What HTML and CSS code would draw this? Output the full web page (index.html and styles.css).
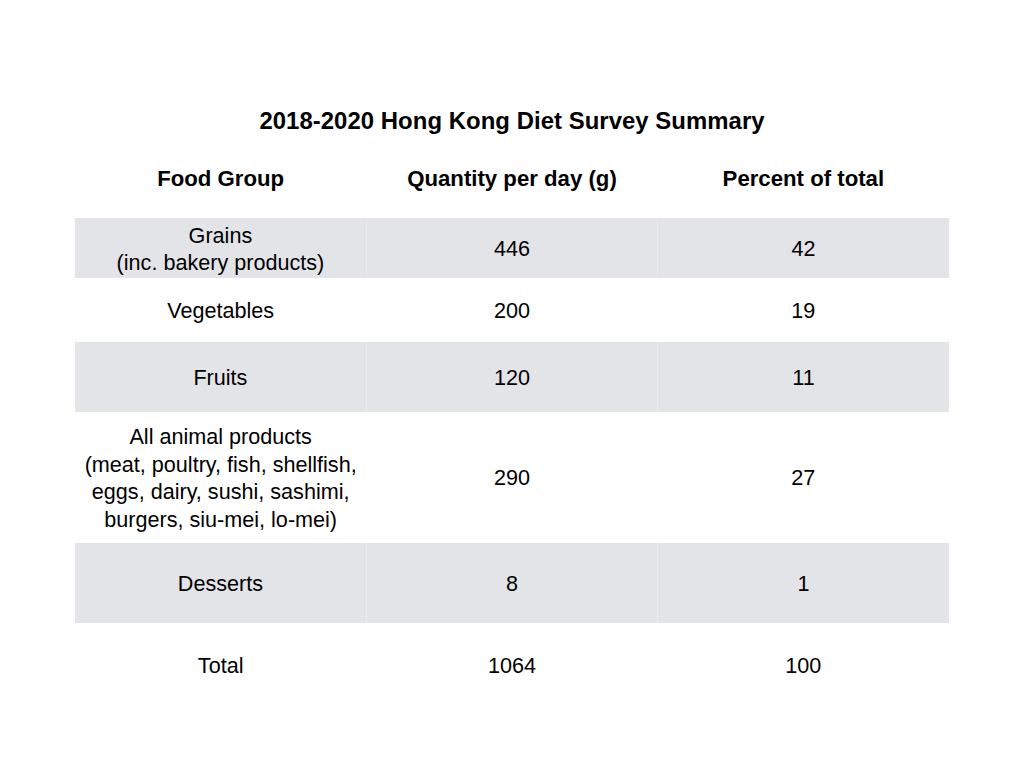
FILE: index.html
```html
<!DOCTYPE html>
<html>
<head>
<meta charset="utf-8">
<link rel="stylesheet" href="styles.css">
</head>
<body>
<div class="page">
  <h1 class="title">2018-2020 Hong Kong Diet Survey Summary</h1>
  <table class="survey">
    <thead>
      <tr class="head">
        <th>Food Group</th>
        <th>Quantity per day (g)</th>
        <th>Percent of total</th>
      </tr>
    </thead>
    <tbody>
      <tr class="r1 shade">
        <td>Grains<br>(inc. bakery products)</td>
        <td>446</td>
        <td>42</td>
      </tr>
      <tr class="r2">
        <td>Vegetables</td>
        <td>200</td>
        <td>19</td>
      </tr>
      <tr class="r3 shade">
        <td>Fruits</td>
        <td>120</td>
        <td>11</td>
      </tr>
      <tr class="r4">
        <td>All animal products<br>(meat, poultry, fish, shellfish,<br>eggs, dairy, sushi, sashimi,<br>burgers, siu-mei, lo-mei)</td>
        <td>290</td>
        <td>27</td>
      </tr>
      <tr class="r5 shade">
        <td>Desserts</td>
        <td>8</td>
        <td>1</td>
      </tr>
      <tr class="r6">
        <td>Total</td>
        <td>1064</td>
        <td>100</td>
      </tr>
    </tbody>
  </table>
</div>
</body>
</html>
```

FILE: styles.css
```css
html, body {
  margin: 0;
  padding: 0;
  background: #ffffff;
}

body {
  font-family: "Liberation Sans", Arial, sans-serif;
  color: #000000;
}

.page {
  width: 1024px;
  height: 768px;
  padding-top: 106px;
  box-sizing: border-box;
}

.title {
  margin: 0 0 2px 0;
  text-align: center;
  font-size: 23.9px;
  line-height: 30px;
  font-weight: bold;
  letter-spacing: 0.05px;
}

.survey {
  margin-left: 75px;
  width: 874px;
  border-collapse: collapse;
  table-layout: fixed;
}

.survey th,
.survey td {
  width: 291px;
  padding: 1px 0 0 0;
  text-align: center;
  vertical-align: middle;
  font-size: 21.6px;
  line-height: 27.5px;
}

.survey th {
  font-weight: bold;
  font-size: 22.2px;
}

.head { height: 80px; }
.r1 { height: 60px; }
.r2 { height: 64px; }
.r3 { height: 70px; }
.r4 { height: 131px; }
.r5 { height: 80px; }
.r6 { height: 84px; }

.r1 td { line-height: 27px; }

.shade td {
  background: #e3e4e8;
}

.shade td + td {
  border-left: 1px solid #eaebee;
}
```
